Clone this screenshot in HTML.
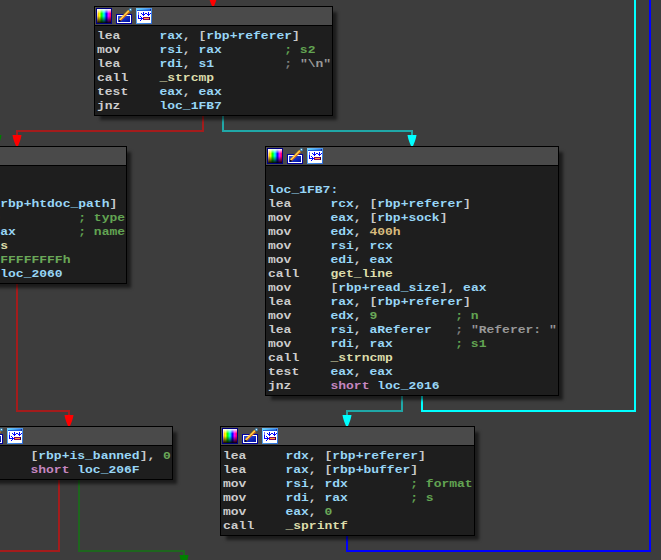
<!DOCTYPE html>
<html><head><meta charset="utf-8">
<style>
html,body{margin:0;padding:0}
body{width:661px;height:560px;overflow:hidden;position:relative;background:#3d3d3d;font-family:"Liberation Mono",monospace}
.b{position:absolute;box-sizing:border-box;border:1px solid #000;background:#1e1e1e;box-shadow:5px 5px 3px -1px rgba(0,0,0,0.55)}
.h{position:absolute;left:0;right:0;top:0;height:18px;background:#4a4a4a;border-bottom:1px solid #000}
.ic{position:absolute;top:1px;width:16px;height:16px}
.t{position:absolute;left:2px;top:22px;font-weight:bold;font-size:13px;line-height:16px;white-space:pre;color:#cccccc;transform:scaleY(0.875);transform-origin:0 0}
.r{color:#98d6f6}.f{color:#dcdcaa}.c{color:#62a452}.g{color:#808080}.s{color:#989898}.n{color:#6aa858}.y{color:#d7ba7d}.k{color:#c586c0}.w{color:#c8c8c8}
svg.e{position:absolute;left:0;top:0}
</style></head><body>
<svg width="0" height="0" style="position:absolute">
<defs>
<linearGradient id="hue" x1="0" y1="0" x2="1" y2="0">
<stop offset="0" stop-color="#ff8000"/><stop offset="0.17" stop-color="#ffff00"/><stop offset="0.33" stop-color="#00ff00"/><stop offset="0.5" stop-color="#00ffff"/><stop offset="0.67" stop-color="#0000ff"/><stop offset="0.83" stop-color="#ff00ff"/><stop offset="1" stop-color="#ff0040"/>
</linearGradient>
<linearGradient id="val" x1="0" y1="0" x2="0" y2="1">
<stop offset="0" stop-color="#fff" stop-opacity="1"/><stop offset="0.33" stop-color="#fff" stop-opacity="0"/><stop offset="0.5" stop-color="#000" stop-opacity="0"/><stop offset="1" stop-color="#000" stop-opacity="0.95"/>
</linearGradient>
<linearGradient id="lc" x1="0" y1="0" x2="0" y2="1"><stop offset="0" stop-color="#ffffff"/><stop offset="0.5" stop-color="#f0c090"/><stop offset="1" stop-color="#201008"/></linearGradient>
<linearGradient id="blu" x1="0" y1="0" x2="1" y2="1">
<stop offset="0" stop-color="#3050e0"/><stop offset="1" stop-color="#0010a0"/>
</linearGradient>
<linearGradient id="wb" x1="0" y1="0" x2="1" y2="1"><stop offset="0" stop-color="#70c8ff"/><stop offset="1" stop-color="#2868d8"/></linearGradient>
<linearGradient id="win" x1="0" y1="0" x2="1" y2="0">
<stop offset="0" stop-color="#60e0ff"/><stop offset="1" stop-color="#2060e0"/>
</linearGradient>
<symbol id="i1" viewBox="0 0 16 16">
<rect x="0" y="0" width="16" height="16" fill="#000080"/>
<rect x="1" y="1" width="14" height="14" fill="url(#hue)"/>
<rect x="1" y="1" width="14" height="14" fill="url(#val)"/>
<rect x="1" y="1" width="1" height="14" fill="url(#lc)"/>
</symbol>
<symbol id="i2" viewBox="0 0 16 16">
<rect x="0" y="6" width="16" height="10" fill="#0000a0"/>
<rect x="1" y="7" width="14" height="8" fill="#ffffff"/>
<rect x="2" y="8" width="12" height="6" fill="url(#blu)"/>
<path d="M4 12.2 L13.2 3" stroke="#e07010" stroke-width="2.6"/>
<path d="M3.6 11.7 L12.8 2.5" stroke="#ffc820" stroke-width="1.5"/>
<path d="M4.3 11.5 L12.6 3.2" stroke="#fffbe0" stroke-width="0.8" stroke-dasharray="0.8 0.7"/>
<circle cx="14.4" cy="1.7" r="1.6" fill="#3a88b8"/>
<rect x="13.9" y="1" width="1.1" height="1.1" fill="#e8f4ff"/>
<rect x="3" y="12.2" width="1.5" height="1.5" fill="#000"/>
</symbol>
<symbol id="i3" viewBox="0 0 16 16" shape-rendering="crispEdges">
<rect x="0" y="0" width="16" height="16" fill="url(#wb)"/>
<rect x="1" y="1" width="14" height="1" fill="url(#win)"/>
<rect x="1" y="2" width="14" height="1" fill="#1c58d8"/>
<rect x="14" y="1" width="1" height="2" fill="#1830a0"/>
<rect x="1" y="3" width="14" height="12" fill="#ffffff"/>
<rect x="2" y="4" width="1" height="3" fill="#7070ff"/>
<g fill="#0000ff">
<rect x="2" y="7" width="1" height="4"/>
<rect x="2" y="10" width="4" height="1"/>
<rect x="4" y="8" width="1" height="1"/><rect x="5" y="9" width="1" height="1"/><rect x="6" y="10" width="1" height="1"/><rect x="5" y="11" width="1" height="1"/><rect x="4" y="12" width="1" height="1"/>
<rect x="5" y="5" width="1" height="1"/>
<rect x="7" y="4" width="1" height="4"/><rect x="6" y="6" width="3" height="1"/>
<rect x="9" y="5" width="2" height="1"/>
<rect x="12" y="4" width="1" height="4"/><rect x="11" y="6" width="3" height="1"/>
<rect x="14" y="5" width="1" height="1"/>
</g>
<rect x="7" y="9" width="7" height="3" fill="#8a0060"/>
<rect x="13" y="9" width="1" height="3" fill="#400030"/>
<rect x="8" y="10" width="5" height="1" fill="#ffa030"/>
</symbol>
</defs>
</svg>

<svg class="e" width="661" height="560" viewBox="0 0 661 560">
<g fill="none" stroke-width="2">
<path d="M203 116 V131 H17 V136" stroke="#a41c1c"/>
<path d="M223 116 V131 H412 V136" stroke="#20a8a8"/>
<path d="M17 284 V411 H69 V416" stroke="#a41c1c"/>
<path d="M402 396 V411 H347 V416" stroke="#20a8a8"/>
<path d="M422 396 V411 H635 V-2" stroke="#00ffff"/>
<path d="M59 480 V551 H-2" stroke="#a41c1c"/>
<path d="M79 480 V551 H184 V556" stroke="#1e661e"/>
<path d="M347 536 V551 H650 V-2" stroke="#0000ff"/>
</g>
<defs><path id="ah" d="M-4.5,-11 L4.5,-11 C4.1,-7.5 2.3,-2.8 1,0 L-1,0 C-2.3,-2.8 -4.1,-7.5 -4.5,-11 Z"/></defs>
<use href="#ah" x="213" y="6" fill="#ff0000"/>
<use href="#ah" x="17" y="146" fill="#ff0000"/>
<use href="#ah" x="412" y="146" fill="#00ffff"/>
<use href="#ah" x="69" y="426" fill="#ff0000"/>
<use href="#ah" x="347" y="426" fill="#00ffff"/>
<use href="#ah" x="184" y="566" fill="#008000"/>
<use href="#ah" x="-3" y="146" fill="#008000"/>
</svg>

<!-- B1 -->
<div class="b" style="left:94px;top:6px;width:239px;height:110px">
<div class="h"><svg class="ic" style="left:1px"><use href="#i1"/></svg><svg class="ic" style="left:21px"><use href="#i2"/></svg><svg class="ic" style="left:41px"><use href="#i3"/></svg></div>
<div class="t">lea     <span class="r">rax</span>, <span class="w">[</span><span class="r">rbp+referer</span><span class="w">]</span>
mov     <span class="r">rsi</span>, <span class="r">rax</span>        <span class="c">; s2</span>
lea     <span class="r">rdi</span>, <span class="r">s1</span>         <span class="g">; </span><span class="s">"\n"</span>
call    <span class="f">_strcmp</span>
test    <span class="r">eax</span>, <span class="r">eax</span>
jnz     <span class="r">loc_1FB7</span></div>
</div>

<!-- B2 -->
<div class="b" style="left:-112px;top:146px;width:239px;height:138px">
<div class="h"><svg class="ic" style="left:1px"><use href="#i1"/></svg><svg class="ic" style="left:21px"><use href="#i2"/></svg><svg class="ic" style="left:41px"><use href="#i3"/></svg></div>
<div class="t">
loc_1F9A:
lea     <span class="r">rax</span>, <span class="w">[</span><span class="r">rbp+htdoc_path</span><span class="w">]</span>
mov     <span class="r">esi</span>, <span class="n">0</span>          <span class="c">; type</span>
mov     <span class="r">rdi</span>, <span class="r">rax</span>        <span class="c">; name</span>
call    <span class="f">_access</span>
cmp     <span class="r">eax</span>, <span class="n">0FFFFFFFFh</span>
jnz     <span class="k">short</span> <span class="r">loc_2060</span></div>
</div>

<!-- B3 -->
<div class="b" style="left:265px;top:146px;width:294px;height:250px">
<div class="h"><svg class="ic" style="left:1px"><use href="#i1"/></svg><svg class="ic" style="left:21px"><use href="#i2"/></svg><svg class="ic" style="left:41px"><use href="#i3"/></svg></div>
<div class="t">
<span class="r">loc_1FB7:</span>
lea     <span class="r">rcx</span>, <span class="w">[</span><span class="r">rbp+referer</span><span class="w">]</span>
mov     <span class="r">eax</span>, <span class="w">[</span><span class="r">rbp+sock</span><span class="w">]</span>
mov     <span class="r">edx</span>, <span class="y">400h</span>
mov     <span class="r">rsi</span>, <span class="r">rcx</span>
mov     <span class="r">edi</span>, <span class="r">eax</span>
call    <span class="f">get_line</span>
mov     <span class="w">[</span><span class="r">rbp+read_size</span><span class="w">]</span>, <span class="r">eax</span>
lea     <span class="r">rax</span>, <span class="w">[</span><span class="r">rbp+referer</span><span class="w">]</span>
mov     <span class="r">edx</span>, <span class="n">9</span>          <span class="c">; n</span>
lea     <span class="r">rsi</span>, <span class="r">aReferer</span>   <span class="g">; </span><span class="s">"Referer: "</span>
mov     <span class="r">rdi</span>, <span class="r">rax</span>        <span class="c">; s1</span>
call    <span class="f">_strncmp</span>
test    <span class="r">eax</span>, <span class="r">eax</span>
jnz     <span class="k">short</span> <span class="r">loc_2016</span></div>
</div>

<!-- B4 -->
<div class="b" style="left:-35px;top:426px;width:208px;height:54px">
<div class="h"><svg class="ic" style="left:1px"><use href="#i1"/></svg><svg class="ic" style="left:21px"><use href="#i2"/></svg><svg class="ic" style="left:41px"><use href="#i3"/></svg></div>
<div class="t">cmp     <span class="w">[</span><span class="r">rbp+is_banned</span><span class="w">]</span>, <span class="n">0</span>
jz      <span class="k">short</span> <span class="r">loc_206F</span></div>
</div>

<!-- B5 -->
<div class="b" style="left:220px;top:426px;width:255px;height:110px">
<div class="h"><svg class="ic" style="left:1px"><use href="#i1"/></svg><svg class="ic" style="left:21px"><use href="#i2"/></svg><svg class="ic" style="left:41px"><use href="#i3"/></svg></div>
<div class="t">lea     <span class="r">rdx</span>, <span class="w">[</span><span class="r">rbp+referer</span><span class="w">]</span>
lea     <span class="r">rax</span>, <span class="w">[</span><span class="r">rbp+buffer</span><span class="w">]</span>
mov     <span class="r">rsi</span>, <span class="r">rdx</span>        <span class="c">; format</span>
mov     <span class="r">rdi</span>, <span class="r">rax</span>        <span class="c">; s</span>
mov     <span class="r">eax</span>, <span class="n">0</span>
call    <span class="f">_sprintf</span></div>
</div>

</body></html>
